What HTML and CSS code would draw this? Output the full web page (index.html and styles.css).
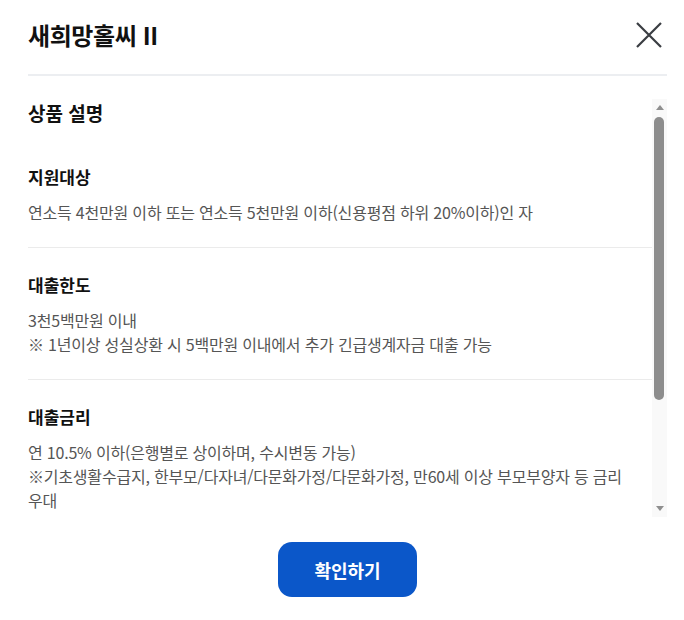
FILE: index.html
```html
<!DOCTYPE html>
<html lang="ko">
<head>
<meta charset="utf-8">
<title>새희망홀씨 II</title>
<link rel="stylesheet" href="styles.css">
</head>
<body>
<div class="modal">
  <header class="modal-header">
    <h1 class="modal-title">새희망홀씨 II</h1>
    <button class="close-btn" type="button" aria-label="닫기">
      <svg width="26" height="26" viewBox="0 0 26 26" aria-hidden="true">
        <path d="M1 1 L25 25 M25 1 L1 25" stroke="#3a3d42" stroke-width="2.2" fill="none"/>
      </svg>
    </button>
  </header>
  <div class="modal-body">
    <div class="scroll-content">
      <h2 class="body-title">상품 설명</h2>
      <section class="info">
        <h3 class="info-title">지원대상</h3>
        <p class="info-text">연소득 4천만원 이하 또는 연소득 5천만원 이하(신용평점 하위 20%이하)인 자</p>
      </section>
      <section class="info">
        <h3 class="info-title">대출한도</h3>
        <p class="info-text">3천5백만원 이내<br>※ 1년이상 성실상환 시 5백만원 이내에서 추가 긴급생계자금 대출 가능</p>
      </section>
      <section class="info">
        <h3 class="info-title">대출금리</h3>
        <p class="info-text">연 10.5% 이하(은행별로 상이하며, 수시변동 가능)<br>※기초생활수급지, 한부모/다자녀/다문화가정/다문화가정, 만60세 이상 부모부양자 등 금리 우대</p>
      </section>
    </div>
    <div class="scrollbar" aria-hidden="true">
      <div class="sb-btn"><span class="arrow-up"></span></div>
      <div class="sb-track"><div class="sb-thumb"></div></div>
      <div class="sb-btn"><span class="arrow-down"></span></div>
    </div>
  </div>
  <footer class="modal-footer">
    <button class="confirm-btn" type="button">확인하기</button>
  </footer>
</div>
</body>
</html>
```

FILE: styles.css
```css
* { box-sizing: border-box; }
html, body { margin: 0; padding: 0; background: #fff; }
body {
  font-family: "Noto Sans CJK KR", "Noto Sans", sans-serif;
  color: #111;
}
.modal {
  width: 684px;
  height: 620px;
  padding: 0 17px 0 28px;
  display: flex;
  flex-direction: column;
}
.modal-header {
  height: 76px;
  flex: none;
  border-bottom: 2px solid #eceef1;
  display: flex;
  align-items: center;
  justify-content: space-between;
  padding-bottom: 4px;
}
.modal-title {
  margin: 0;
  font-size: 24px;
  font-weight: 700;
  line-height: 30px;
  color: #111;
  letter-spacing: -0.4px;
}
.close-btn {
  border: 0;
  background: none;
  padding: 0;
  width: 26px;
  height: 26px;
  margin-right: 5px;
  display: flex;
}
.modal-body {
  margin-top: 23px;
  height: 418px;
  flex: none;
  display: flex;
}
.scroll-content {
  flex: 1;
  min-width: 0;
  overflow: hidden;
  padding-top: 1px;
}
.scrollbar {
  width: 15px;
  flex: none;
  background: #f9f9f9;
  display: flex;
  flex-direction: column;
}
.sb-btn {
  height: 17px;
  flex: none;
  display: flex;
  align-items: center;
  justify-content: center;
}
.arrow-up {
  width: 0;
  height: 0;
  border-left: 4px solid transparent;
  border-right: 4px solid transparent;
  border-bottom: 5px solid #8f8f8f;
}
.arrow-down {
  width: 0;
  height: 0;
  border-left: 4px solid transparent;
  border-right: 4px solid transparent;
  border-top: 5px solid #8f8f8f;
}
.sb-track {
  flex: 1;
  padding: 1px 3px 0 2px;
}
.sb-thumb {
  height: 283px;
  background: #8d8d8d;
  border-radius: 5px;
}
.body-title {
  margin: 0 0 14px;
  font-size: 19px;
  font-weight: 700;
  line-height: 26px;
}
.info {
  padding: 25px 0 23px;
  border-bottom: 1px solid #ebebeb;
}
.info:last-child { border-bottom: 0; }
.info-title {
  margin: 0 0 11px;
  font-size: 17px;
  font-weight: 700;
  line-height: 24px;
}
.info-text {
  margin: 0;
  font-size: 16px;
  line-height: 24px;
  color: #555;
  letter-spacing: -0.2px;
  word-break: keep-all;
}
.modal-footer {
  display: flex;
  justify-content: center;
  padding-top: 25px;
}
.confirm-btn {
  width: 139px;
  height: 55px;
  border: 0;
  border-radius: 14px;
  background: #0b57c9;
  color: #fff;
  font-family: inherit;
  font-size: 18px;
  font-weight: 700;
}
```
